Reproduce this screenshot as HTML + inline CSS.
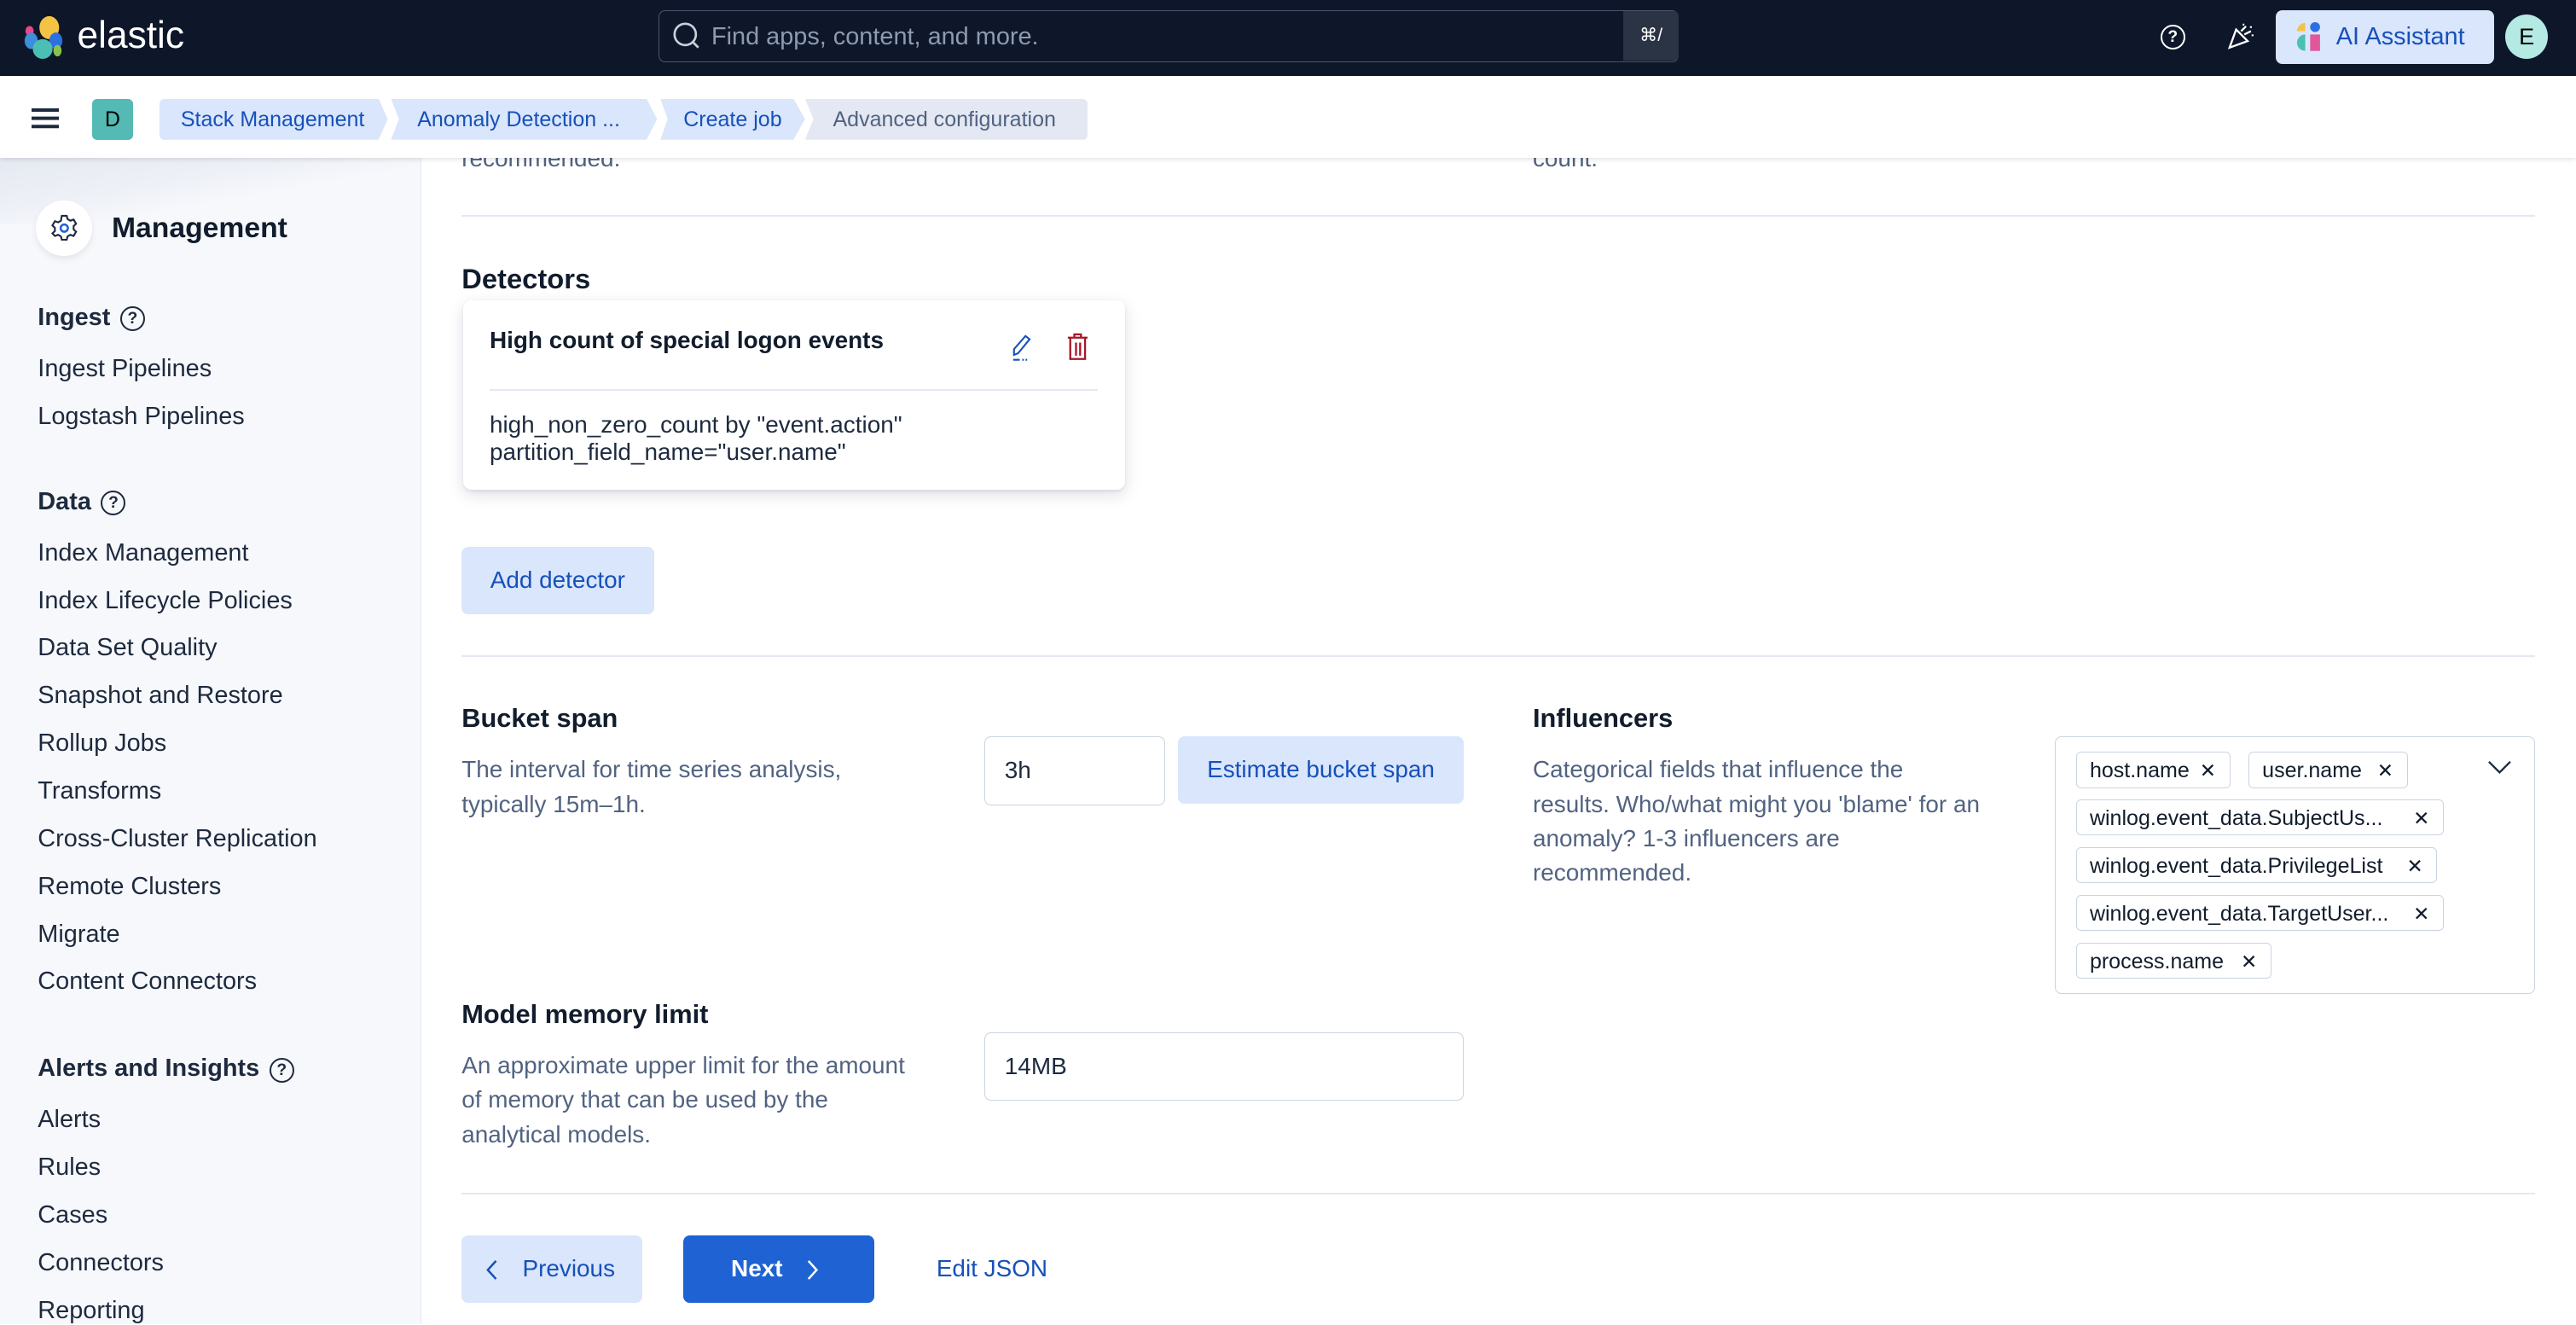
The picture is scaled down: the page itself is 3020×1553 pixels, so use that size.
<!DOCTYPE html>
<html><head><meta charset="utf-8"><style>
html{zoom:1.926}
body{margin:0;width:1568px;height:806px;overflow:hidden;position:relative;font-family:"Liberation Sans",sans-serif;color:#1d2a3e;background:#fff}
.a{position:absolute}
.t{position:absolute;white-space:nowrap}
.bc{position:absolute;top:60px;height:25px;line-height:25px;font-size:13px;color:#1750ba;background:#d9e6fb}
.si{position:absolute;left:23px;font-size:15px;color:#1d2a3e}
.sh{position:absolute;left:23px;font-size:15px;font-weight:bold;color:#1d2a3e}
.q{display:inline-block;width:13px;height:13px;border:1.3px solid #1d2a3e;border-radius:50%;font-size:10px;line-height:13px;text-align:center;font-weight:bold;vertical-align:1px;margin-left:6px}
.hr{position:absolute;left:281px;width:1262px;height:1px;background:#e3e8f2}
.h{font-size:16px;font-weight:bold;color:#111c2c}
.d{font-size:14.5px;color:#516381;line-height:21px}
.inp{position:absolute;border:1px solid #cad3e2;border-radius:4px;background:#fff;font-size:14.5px;line-height:40px;padding-left:12px;box-sizing:border-box;height:42px}
.pill{position:absolute;left:12px;height:22px;border:1px solid #cad3e2;border-radius:3px;font-size:13px;line-height:22px;padding:0 8px;box-sizing:border-box;color:#111c2c;background:#fff}
.pill span{margin-left:6px;font-size:12px}
</style></head><body>
<!-- header -->
<div class="a" style="left:0;top:0;width:1568px;height:46px;background:#0e1729"></div>
<svg class="a" style="left:13px;top:9px" width="28" height="28" viewBox="0 0 28 28">
<ellipse cx="17" cy="8" rx="6" ry="7" fill="#f5c344"/><ellipse cx="5" cy="10" rx="2.5" ry="3" fill="#e8478b"/><ellipse cx="6" cy="16" rx="4" ry="5" fill="#3d8fd9"/><ellipse cx="21" cy="16" rx="4" ry="5" fill="#2c6fe0"/><ellipse cx="13" cy="21" rx="6" ry="6" fill="#4bbfb4"/><ellipse cx="22" cy="22" rx="2.5" ry="3.5" fill="#8bc34a"/></svg>
<div class="t" style="left:47px;top:9px;font-size:23px;color:#fff">elastic</div>
<div class="a" style="left:401px;top:6px;width:621px;height:32px;border:1px solid #4a5570;border-radius:4px;box-sizing:border-box"></div>
<div class="a" style="left:988px;top:7px;width:34px;height:30px;background:#2b3445;border-radius:0 3px 3px 0;color:#fff;font-size:11px;line-height:30px;text-align:center">⌘/</div>
<svg class="a" style="left:408px;top:12px" width="20" height="20" viewBox="0 0 20 20"><circle cx="9" cy="9" r="6.5" fill="none" stroke="#c7cfdb" stroke-width="1.4"/><line x1="13.5" y1="13.5" x2="17" y2="17" stroke="#c7cfdb" stroke-width="1.4"/></svg>
<div class="t" style="left:433px;top:14px;font-size:15px;color:#8e9ab0">Find apps, content, and more.</div>
<div class="a" style="left:1315px;top:15px;width:13px;height:13px;border:1.3px solid #fff;border-radius:50%;color:#fff;font-size:10px;line-height:13px;text-align:center;font-weight:bold">?</div>
<svg class="a" style="left:1355px;top:13px" width="18" height="18" viewBox="0 0 18 18" fill="none" stroke="#fff" stroke-width="1.2"><path d="M2 16 L6 5 L13 12 Z"/><path d="M9 6 L12 3 M11 8 L15 6 M10 2 l1 0 M15 3 l0 1 M16 8 l0 1"/></svg>
<div class="a" style="left:1385px;top:6px;width:133px;height:33px;background:#d9e6fb;border-radius:4px"></div>
<svg class="a" style="left:1397px;top:13px" width="16" height="20" viewBox="0 0 16 20"><path d="M6 1 A5 5 0 0 0 1 6 H6 Z" fill="#f5c344"/><circle cx="12" cy="3.5" r="3" fill="#2c6fe0"/><path d="M6 8 A5 5 0 0 0 6 18 Z" fill="#4bbfb4"/><rect x="9" y="8" width="6" height="10" fill="#e0579a"/></svg>
<div class="t" style="left:1422px;top:14px;font-size:15px;color:#1750ba">AI Assistant</div>
<div class="a" style="left:1525px;top:9px;width:26px;height:27px;border-radius:50%;background:#b4e9e4;font-size:14px;line-height:27px;text-align:center;color:#000">E</div>
<!-- bar2 -->
<div class="a" style="left:0;top:46px;width:1568px;height:50px;background:#fff;box-shadow:0 1px 3px rgba(0,0,0,.12);z-index:2">
<div class="a" style="left:19px;top:20px;width:17px;height:2px;background:#1d2a3e;box-shadow:0 5px 0 #1d2a3e,0 10px 0 #1d2a3e"></div>
<div class="a" style="left:56px;top:14px;width:25px;height:25px;background:#54bab3;border-radius:3px;font-size:13px;line-height:25px;text-align:center;color:#000">D</div>
</div>
<div style="position:absolute;z-index:3">
<div class="bc" style="left:97px;width:139px;padding-left:13px;box-sizing:border-box;border-radius:3px 0 0 3px;clip-path:polygon(0 0,96% 0,100% 50%,96% 100%,0 100%)">Stack Management</div>
<div class="bc" style="left:238px;width:162px;padding-left:16px;box-sizing:border-box;clip-path:polygon(0 0,96% 0,100% 50%,96% 100%,0 100%,3% 50%)">Anomaly Detection ...</div>
<div class="bc" style="left:402px;width:88px;padding-left:14px;box-sizing:border-box;clip-path:polygon(0 0,92% 0,100% 50%,92% 100%,0 100%,5% 50%)">Create job</div>
<div class="bc" style="left:490px;width:172px;padding-left:17px;box-sizing:border-box;background:#e3e8f2;color:#516381;border-radius:0 3px 3px 0;clip-path:polygon(0 0,100% 0,100% 100%,0 100%,3% 50%)">Advanced configuration</div>
</div>
<!-- sidebar -->
<div class="a" style="left:0;top:96px;width:256px;height:710px;background:#f7f8fc;border-right:1px solid #e3e8f2"></div>
<div class="a" style="left:0;top:96px;width:256px;height:40px;background:linear-gradient(170deg,#e5e9f1 0,#eef1f7 40%,rgba(247,248,252,0) 60%)"></div>
<div class="a" style="left:22px;top:122px;width:34px;height:34px;border-radius:50%;background:#fff;box-shadow:0 2px 4px rgba(0,0,0,.08)"></div>
<svg class="a" style="left:30px;top:130px" width="18" height="18" viewBox="0 0 18 18"><path d="M7.5 1.5h3l.5 2 1.7 1 2-.7 1.5 2.6-1.5 1.4v2l1.5 1.4-1.5 2.6-2-.7-1.7 1-.5 2h-3l-.5-2-1.7-1-2 .7L1.8 12.2 3.3 10.8v-2L1.8 7.4 3.3 4.8l2 .7 1.7-1z" fill="none" stroke="#1d2a3e" stroke-width="1.1"/><circle cx="9" cy="9" r="2.2" fill="none" stroke="#1e62d4" stroke-width="1.3"/></svg>
<div class="t" style="left:68px;top:129px;font-size:17.5px;font-weight:bold;color:#111c2c">Management</div>
<div class="sh" style="top:185px">Ingest<span class="q">?</span></div>
<div class="si" style="top:216px">Ingest Pipelines</div>
<div class="si" style="top:245px">Logstash Pipelines</div>
<div class="sh" style="top:297px">Data<span class="q">?</span></div>
<div class="si" style="top:328px">Index Management</div>
<div class="si" style="top:357px">Index Lifecycle Policies</div>
<div class="si" style="top:386px">Data Set Quality</div>
<div class="si" style="top:415px">Snapshot and Restore</div>
<div class="si" style="top:444px">Rollup Jobs</div>
<div class="si" style="top:473px">Transforms</div>
<div class="si" style="top:502px">Cross-Cluster Replication</div>
<div class="si" style="top:531px">Remote Clusters</div>
<div class="si" style="top:560px">Migrate</div>
<div class="si" style="top:589px">Content Connectors</div>
<div class="sh" style="top:642px">Alerts and Insights<span class="q">?</span></div>
<div class="si" style="top:673px">Alerts</div>
<div class="si" style="top:702px">Rules</div>
<div class="si" style="top:731px">Cases</div>
<div class="si" style="top:760px">Connectors</div>
<div class="si" style="top:789px">Reporting</div>
<!-- content -->
<div class="t d" style="left:281px;top:86px">recommended.</div>
<div class="t d" style="left:933px;top:86px">count.</div>
<div class="hr" style="top:131px"></div>
<div class="t h" style="left:281px;top:160px;font-size:17px">Detectors</div>
<div class="a" style="left:282px;top:183px;width:403px;height:115px;background:#fff;border-radius:5px;box-shadow:0 3px 10px rgba(0,20,60,.13),0 1px 2px rgba(0,20,60,.08)"></div>
<div class="t" style="left:298px;top:199px;font-size:14.5px;font-weight:bold;color:#111c2c">High count of special logon events</div>
<svg class="a" style="left:614px;top:202px" width="18" height="18" viewBox="0 0 18 18" fill="none" stroke="#1750ba" stroke-width="1.1"><path d="M3 14 L3 10.5 L10 2.5 L12.5 4.5 L5.5 13 Z"/><path d="M2.5 17h4M8 17h1M10 17h1"/></svg>
<svg class="a" style="left:648px;top:202px" width="16" height="18" viewBox="0 0 16 18" fill="none" stroke="#a71627" stroke-width="1.2"><path d="M2 3.5h12M6 3.5V1.5h4v2M3.5 3.5v13h9v-13M7 6.5v8M9.5 6.5v8"/></svg>
<div class="a" style="left:298px;top:237px;width:370px;height:1px;background:#e3e8f2"></div>
<div class="t" style="left:298px;top:250px;font-size:14.5px;line-height:17px;color:#1d2a3e">high_non_zero_count by "event.action"<br>partition_field_name="user.name"</div>
<div class="a" style="left:281px;top:333px;width:117px;height:41px;background:#d9e6fb;border-radius:4px;color:#1750ba;font-size:14.5px;line-height:41px;text-align:center">Add detector</div>
<div class="hr" style="top:399px"></div>
<div class="t h" style="left:281px;top:428px">Bucket span</div>
<div class="t d" style="left:281px;top:458px">The interval for time series analysis,<br>typically 15m–1h.</div>
<div class="inp" style="left:599px;top:448px;width:110px">3h</div>
<div class="a" style="left:717px;top:448px;width:174px;height:41px;background:#d9e6fb;border-radius:4px;color:#1750ba;font-size:14.5px;line-height:41px;text-align:center">Estimate bucket span</div>
<div class="t h" style="left:933px;top:428px">Influencers</div>
<div class="t d" style="left:933px;top:458px">Categorical fields that influence the<br>results. Who/what might you 'blame' for an<br>anomaly? 1-3 influencers are<br>recommended.</div>
<div class="a" style="left:1251px;top:448px;width:292px;height:157px;border:1px solid #cad3e2;border-radius:4px;box-sizing:border-box">
<div class="pill" style="top:9px;width:94px">host.name<span style="position:absolute;right:8px">✕</span></div>
<div class="pill" style="top:9px;left:117px;width:97px">user.name<span style="position:absolute;right:8px">✕</span></div>
<div class="pill" style="top:38px;width:224px">winlog.event_data.SubjectUs...<span style="position:absolute;right:8px">✕</span></div>
<div class="pill" style="top:67px;width:220px">winlog.event_data.PrivilegeList<span style="position:absolute;right:8px">✕</span></div>
<div class="pill" style="top:96px;width:224px">winlog.event_data.TargetUser...<span style="position:absolute;right:8px">✕</span></div>
<div class="pill" style="top:125px;width:119px">process.name<span style="position:absolute;right:8px">✕</span></div>
<svg class="a" style="left:262px;top:13px" width="16" height="10" viewBox="0 0 16 10"><path d="M1.5 2 L8 8.5 L14.5 2" fill="none" stroke="#1d2a3e" stroke-width="1.2"/></svg>
</div>
<div class="t h" style="left:281px;top:608px">Model memory limit</div>
<div class="t d" style="left:281px;top:638px">An approximate upper limit for the amount<br>of memory that can be used by the<br>analytical models.</div>
<div class="inp" style="left:599px;top:628px;width:292px">14MB</div>
<div class="hr" style="top:726px"></div>
<div class="a" style="left:281px;top:752px;width:110px;height:41px;background:#d9e6fb;border-radius:4px;color:#1750ba;font-size:14.5px;line-height:41px"><svg class="a" style="left:14px;top:14px" width="10" height="14" viewBox="0 0 10 14"><path d="M7 1.5 L2 7 L7 12.5" fill="none" stroke="#1750ba" stroke-width="1.3"/></svg><span style="position:absolute;left:37px">Previous</span></div>
<div class="a" style="left:416px;top:752px;width:116px;height:41px;background:#1e62d4;border-radius:4px;color:#fff;font-size:14.5px;line-height:41px;font-weight:bold"><span style="position:absolute;left:29px">Next</span><svg class="a" style="left:73px;top:14px" width="10" height="14" viewBox="0 0 10 14"><path d="M3 1.5 L8 7 L3 12.5" fill="none" stroke="#fff" stroke-width="1.3"/></svg></div>
<div class="t" style="left:570px;top:764px;font-size:14.5px;color:#1750ba">Edit JSON</div>
</body></html>
